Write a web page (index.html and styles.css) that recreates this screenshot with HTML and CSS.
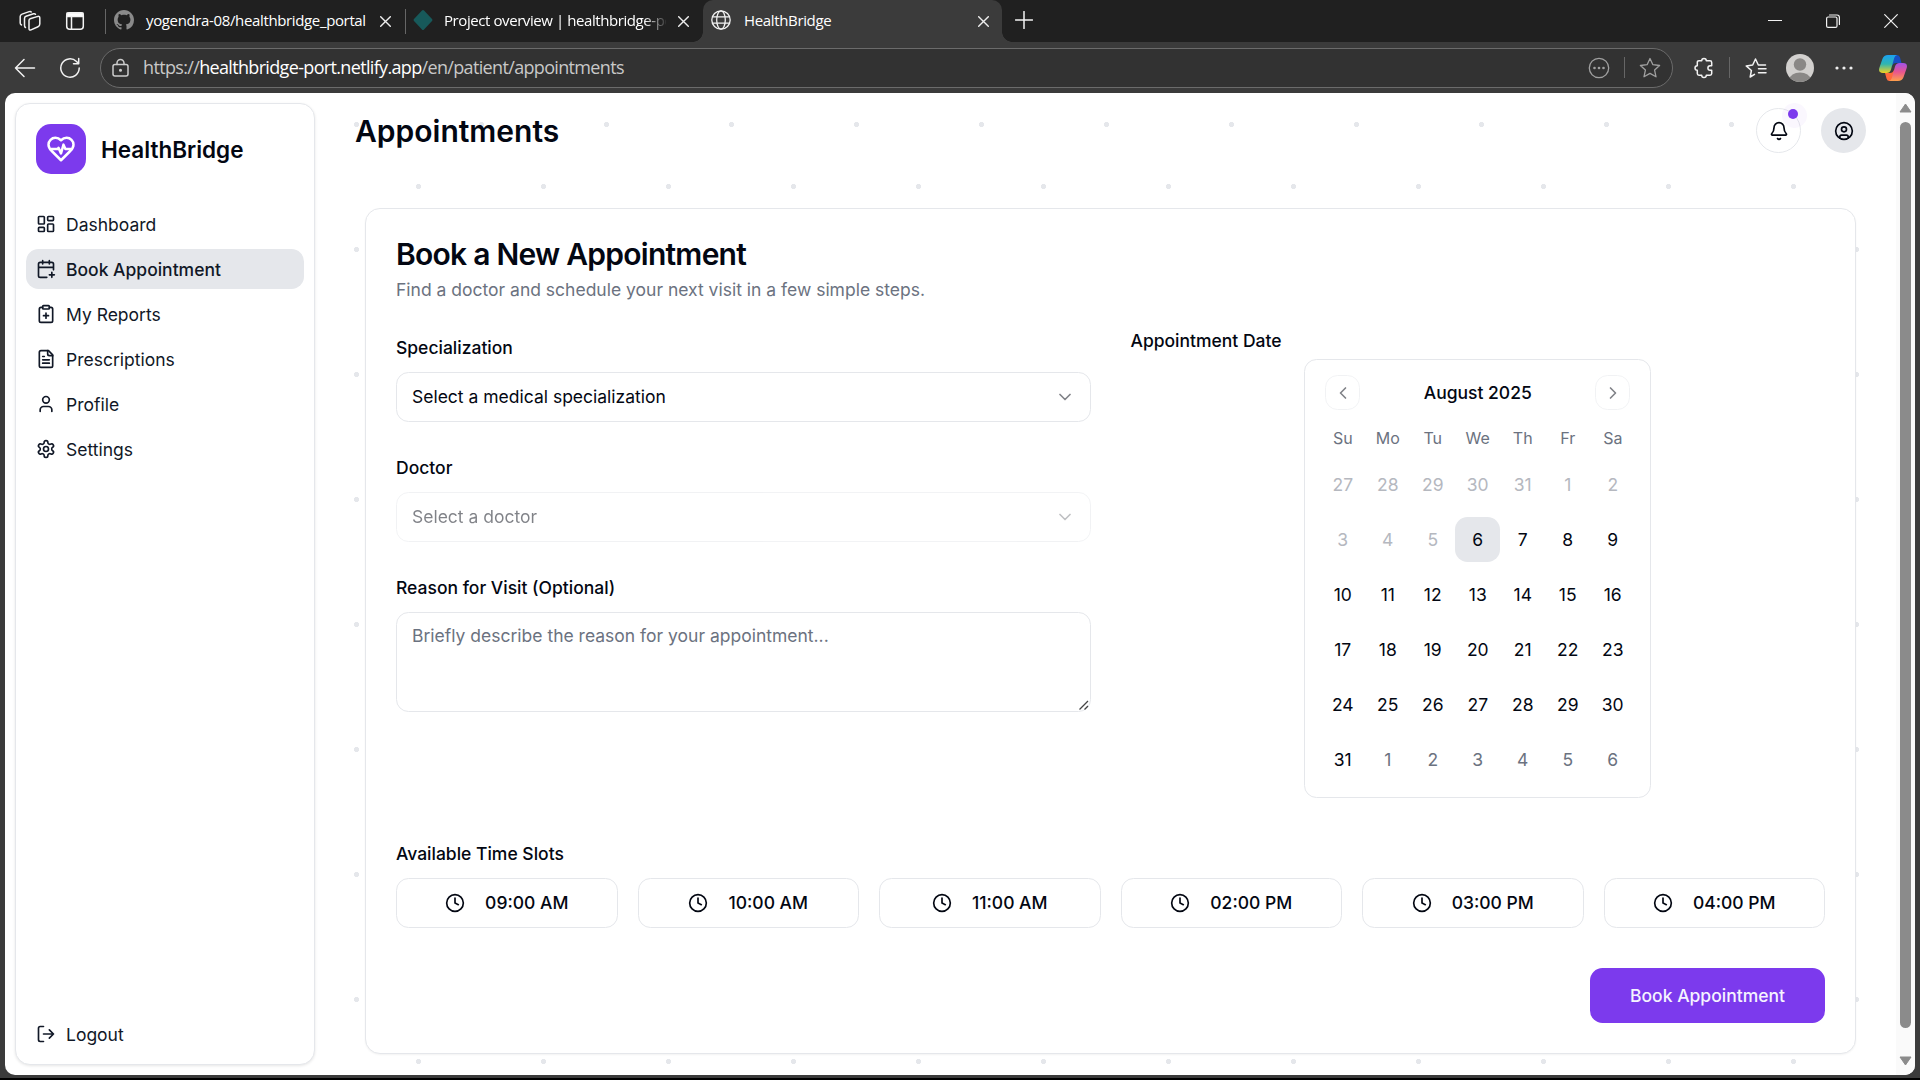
FILE: index.html
```html
<!DOCTYPE html>
<html lang="en">
<head>
<meta charset="utf-8">
<title>HealthBridge</title>
<link rel="stylesheet" href="styles.css">
</head>
<body>
<div class="tabstrip">
  <span class="slot slot-workspaces"><svg width="22" height="22" viewBox="0 0 22 22" class="chrome-icon"><path d="M11.200 8.800 18.800 6.400Q20.800 6 20.800 8V14Q20.800 16 19 16.700L12 19.900Q10 20.700 10 18.500V10.500Q10 9.200 11.200 8.800zM6.500 17.500Q5.500 17 5.500 15.500V8.500Q5.500 6.800 7 6.300L14.500 3.800Q16 3.400 16.500 4.300M2.500 15Q1.200 14.300 1.200 13V6.500Q1.200 4.700 3 4.100L10.200 1.600Q11.700 1.200 12.200 2"/></svg></span>
  <span class="slot slot-tabs"><svg width="20" height="20" viewBox="0 0 20 20" class="chrome-icon"><rect x="1.700" y="1.700" width="16.600" height="16.600" rx="3"/><path d="M2 2h16v3.500H2z" fill="#fff"/><path d="M6.500 6v12"/></svg></span>
  <div class="tab tab-idle">
    <svg class="favicon" viewBox="0 0 16 16" fill="#8a8a8a"><path d="M8 0C3.580 0 0 3.580 0 8c0 3.540 2.290 6.530 5.470 7.590.4.070.55-.17.55-.38 0-.19-.01-.82-.01-1.490-2.010.37-2.530-.49-2.690-.94-.09-.23-.48-.94-.82-1.130-.28-.15-.68-.52-.01-.53.630-.01 1.080.58 1.230.82.720 1.210 1.870.87 2.330.66.070-.52.280-.87.510-1.070-1.780-.2-3.640-.89-3.640-3.950 0-.87.310-1.590.82-2.150-.08-.2-.36-1.020.08-2.120 0 0 .67-.21 2.200.82.640-.18 1.320-.27 2-.27s1.360.09 2 .27c1.530-1.040 2.200-.82 2.200-.82.440 1.100.16 1.920.08 2.120.51.56.82 1.270.82 2.150 0 3.070-1.870 3.750-3.650 3.950.29.250.54.730.54 1.480 0 1.070-.01 1.930-.01 2.200 0 .21.150.46.550.38A8.010 8.010 0 0 0 16 8c0-4.420-3.580-8-8-8z"/></svg>
    <span class="tab-title t1">yogendra-08/healthbridge_portal</span>
    <svg class="close" viewBox="0 0 11 11"><path d="M.7.7l9.600 9.600M10.300.7.7 10.300"/></svg>
  </div>
  <div class="tab tab-idle tab-second">
    <svg class="favicon" viewBox="0 0 20 20"><path d="M9 .6q1-1 2 0l8 8.400q.9 1 0 2l-8 8.400q-1 1-2 0l-8-8.400q-.9-1 0-2z" fill="#17595a"/></svg>
    <span class="tab-title t2">Project overview | healthbridge-po</span>
    <svg class="close" viewBox="0 0 11 11"><path d="M.7.7l9.600 9.600M10.300.7.7 10.300"/></svg>
  </div>
  <div class="tab tab-active">
    <svg class="favicon chrome-icon" viewBox="0 0 20 20"><circle cx="10" cy="10" r="9.200"/><ellipse cx="10" cy="10" rx="4.300" ry="9.200"/><path d="M1.500 6.800h17M1.500 13.200h17"/></svg>
    <span class="tab-title t3">HealthBridge</span>
    <svg class="close" viewBox="0 0 11 11"><path d="M.7.7l9.600 9.600M10.300.7.7 10.300"/></svg>
  </div>
  <span class="slot slot-plus"><svg width="18" height="18" viewBox="0 0 18 18" class="chrome-icon"><path d="M9 .5v17M.5 9h17"/></svg></span>
  <div class="window-buttons">
    <span class="slot"><svg width="14" height="14" viewBox="0 0 14 14" class="chrome-icon thin"><path d="M.5 6.500h13"/></svg></span>
    <span class="slot"><svg width="14" height="14" viewBox="0 0 14 14" class="chrome-icon thin"><rect x=".6" y="3" width="10.400" height="10.400" rx="1.500"/><path d="M3.500 1h7.500q2.400 0 2.400 2.400V10.500"/></svg></span>
    <span class="slot"><svg width="14" height="14" viewBox="0 0 14 14" class="chrome-icon thin"><path d="M.7.7l12.600 12.600M13.300.7.7 13.300"/></svg></span>
  </div>
</div>

<div class="toolbar">
  <span class="slot slot-nav"><svg width="22" height="20" viewBox="0 0 22 20" class="chrome-icon"><path d="M20.500 10H1.500M10 1.500 1.500 10l8.500 8.500"/></svg></span>
  <span class="slot slot-reload"><svg width="22" height="22" viewBox="0 0 22 22" class="chrome-icon"><path d="M20.200 11a9.200 9.200 0 1 1-2.700-6.500L19.500 6.500M19.700 1.500v5.200H14.500"/></svg></span>
  <div class="address">
    <svg width="17" height="20" viewBox="0 0 17 20" class="chrome-icon dim"><rect x="1" y="6.500" width="15" height="11.500" rx="2"/><path d="M5 6.500V5a3.500 3.500 0 0 1 7 0v1.500"/><circle cx="8.500" cy="12.300" r=".8" fill="#ccc"/></svg>
    <span class="url">https://<b>healthbridge-port.netlify.app</b>/en/patient/appointments</span>
    <span class="address-tools">
      <svg width="22" height="22" viewBox="0 0 22 22" class="chrome-icon grey"><circle cx="11" cy="11" r="9.700"/><g fill="#a0a0a0" stroke="none"><circle cx="6.500" cy="11" r="1.300"/><circle cx="11" cy="11" r="1.300"/><circle cx="15.500" cy="11" r="1.300"/></g></svg>
      <i class="rule"></i>
      <svg width="22" height="22" viewBox="0 0 22 22" class="chrome-icon grey"><path d="m11 1.500 2.900 6.200 6.700.8-5 4.600 1.400 6.700-6-3.400-6 3.400 1.400-6.700-5-4.600 6.700-.8z"/></svg>
    </span>
  </div>
  <span class="slot slot-ext"><svg width="22" height="22" viewBox="0 0 22 22" class="chrome-icon"><path d="M6 3.700h2.700a2.300 2.300 0 0 1 4.600 0H17q1.700 0 1.700 1.700V8.700h-1.500a2.300 2.300 0 0 0 0 4.600h1.500V16.600q0 1.700-1.700 1.700h-3.700a2.300 2.300 0 0 1-4.600 0H6q-1.700 0-1.700-1.700v-3.300a2.300 2.300 0 0 1 0-4.600V5.400q0-1.700 1.700-1.700"/></svg></span>
  <i class="rule"></i>
  <span class="slot slot-fav"><svg width="22" height="22" viewBox="0 0 22 22" class="chrome-icon"><path d="M9.500 17.300 5.200 20l1.200-6.500L1.200 8.900l6.500-.9L10.500 2l2.800 6h7.200M13.500 11.700h7.500M13.500 15.700h7.500"/></svg></span>
  <span class="slot slot-avatar"><svg width="28" height="28" viewBox="0 0 28 28"><clipPath id="av"><circle cx="14" cy="14" r="14"/></clipPath><g clip-path="url(#av)"><path d="M0 0h28v28H0z" fill="#d2d0ce"/><circle cx="14" cy="10.500" r="6.200" fill="#8a8886"/><ellipse cx="14" cy="25.500" rx="10.500" ry="7" fill="#8a8886"/></g></svg></span>
  <span class="slot slot-more"><svg width="18" height="4" viewBox="0 0 18 4" fill="#eee"><circle cx="2" cy="2" r="1.600"/><circle cx="9" cy="2" r="1.600"/><circle cx="16" cy="2" r="1.600"/></svg></span>
  <span class="slot slot-copilot"><svg width="28" height="26" viewBox="0 0 28 26">
    <defs>
      <linearGradient id="ca" x1="0" y1="0" x2="0" y2="1"><stop offset="0" stop-color="#1ba1f2"/><stop offset=".5" stop-color="#2fb5b0"/><stop offset="1" stop-color="#f2d220"/></linearGradient>
      <linearGradient id="cb" x1="0" y1="0" x2="0" y2="1"><stop offset="0" stop-color="#a052e8"/><stop offset=".5" stop-color="#e8558f"/><stop offset="1" stop-color="#ffa04b"/></linearGradient>
    </defs>
    <path d="M13 0h5q2.200 0 3 2.500L22.500 8H17q-3 0-4 3z" fill="#174fc4"/>
    <path d="M15 26H10.500Q8.300 26 7.500 23.500L6 18h5q3 0 4-3z" fill="#ff6a3c"/>
    <path d="M9 0h9q-2 .3-2.800 3L12 14.500Q11 18 7.500 18H4q-5 0-3.700-5L3.400 4Q4.800 0 9 0z" fill="url(#ca)"/>
    <path d="M19 26H10q2-.3 2.800-3L16 11.500Q17 8 20.500 8H24q5 0 3.700 5L24.600 22Q23.200 26 19 26z" fill="url(#cb)"/>
  </svg></span>
</div>

<div class="viewport">
  <aside class="sidebar">
    <div class="brand">
      <span class="brand-mark"><svg viewBox="0 0 24 24" class="lucide"><path d="M19 14c1.490-1.460 3-3.210 3-5.500A5.500 5.500 0 0 0 16.500 3c-1.760 0-3 .5-4.500 2-1.500-1.500-2.740-2-4.500-2A5.500 5.500 0 0 0 2 8.500c0 2.300 1.500 4.050 3 5.500l7 7Z"/><path d="M3.220 12H9.500l.5-1 2 4.500 2-7 1.500 3.500h5.270"/></svg></span>
      <span class="brand-name">HealthBridge</span>
    </div>
    <nav class="nav">
      <a class="nav-item"><svg class="lucide" viewBox="0 0 24 24"><rect width="7" height="9" x="3" y="3" rx="1"/><rect width="7" height="5" x="14" y="3" rx="1"/><rect width="7" height="9" x="14" y="12" rx="1"/><rect width="7" height="5" x="3" y="16" rx="1"/></svg>Dashboard</a>
      <a class="nav-item active"><svg class="lucide" viewBox="0 0 24 24"><path d="M8 2v4M16 2v4M21 13V6a2 2 0 0 0-2-2H5a2 2 0 0 0-2 2v14a2 2 0 0 0 2 2h8M3 10h18M16 19h6M19 16v6"/></svg>Book Appointment</a>
      <a class="nav-item"><svg class="lucide" viewBox="0 0 24 24"><rect width="8" height="4" x="8" y="2" rx="1"/><path d="M16 4h2a2 2 0 0 1 2 2v14a2 2 0 0 1-2 2H6a2 2 0 0 1-2-2V6a2 2 0 0 1 2-2h2M9 14h6M12 17v-6"/></svg>My Reports</a>
      <a class="nav-item"><svg class="lucide" viewBox="0 0 24 24"><path d="M15 2H6a2 2 0 0 0-2 2v16a2 2 0 0 0 2 2h12a2 2 0 0 0 2-2V7Z"/><path d="M14 2v4a2 2 0 0 0 2 2h4M10 9H8M16 13H8M16 17H8"/></svg>Prescriptions</a>
      <a class="nav-item"><svg class="lucide" viewBox="0 0 24 24"><path d="M19 21v-2a4 4 0 0 0-4-4H9a4 4 0 0 0-4 4v2"/><circle cx="12" cy="7" r="4"/></svg>Profile</a>
      <a class="nav-item"><svg class="lucide" viewBox="0 0 24 24"><path d="M12.220 2h-.44a2 2 0 0 0-2 2v.18a2 2 0 0 1-1 1.730l-.43.250a2 2 0 0 1-2 0l-.15-.08a2 2 0 0 0-2.730.73l-.22.380a2 2 0 0 0 .73 2.730l.15.100a2 2 0 0 1 1 1.720v.51a2 2 0 0 1-1 1.740l-.15.090a2 2 0 0 0-.73 2.730l.22.380a2 2 0 0 0 2.730.73l.15-.08a2 2 0 0 1 2 0l.43.250a2 2 0 0 1 1 1.730V20a2 2 0 0 0 2 2h.44a2 2 0 0 0 2-2v-.18a2 2 0 0 1 1-1.730l.43-.25a2 2 0 0 1 2 0l.15.080a2 2 0 0 0 2.730-.73l.22-.39a2 2 0 0 0-.73-2.730l-.15-.08a2 2 0 0 1-1-1.740v-.5a2 2 0 0 1 1-1.740l.15-.09a2 2 0 0 0 .73-2.730l-.22-.38a2 2 0 0 0-2.730-.73l-.15.080a2 2 0 0 1-2 0l-.43-.25a2 2 0 0 1-1-1.730V4a2 2 0 0 0-2-2z"/><circle cx="12" cy="12" r="3"/></svg>Settings</a>
    </nav>
    <a class="nav-item logout"><svg class="lucide" viewBox="0 0 24 24"><path d="M9 21H5a2 2 0 0 1-2-2V5a2 2 0 0 1 2-2h4M16 17l5-5-5-5M21 12H9"/></svg>Logout</a>
  </aside>

  <main class="main">
    <header class="page-head">
      <h1>Appointments</h1>
      <div class="head-actions">
        <span class="round bell"><svg class="lucide" viewBox="0 0 24 24"><path d="M10.268 21a2 2 0 0 0 3.464 0"/><path d="M3.262 15.326A1 1 0 0 0 4 17h16a1 1 0 0 0 .74-1.673C19.410 13.956 18 12.499 18 8A6 6 0 0 0 6 8c0 4.499-1.411 5.956-2.738 7.326"/></svg><i class="ping"></i><i class="badge"></i></span>
        <span class="round user"><svg class="lucide" viewBox="0 0 24 24"><path d="M7 20.660V19a2 2 0 0 1 2-2h6a2 2 0 0 1 2 2v1.660"/><circle cx="12" cy="10" r="3"/><circle cx="12" cy="12" r="10"/></svg></span>
      </div>
    </header>

    <section class="card">
      <h2>Book a New Appointment</h2>
      <p class="lead">Find a doctor and schedule your next visit in a few simple steps.</p>
      <div class="columns">
        <div class="fields">
          <div class="field">
            <label>Specialization</label>
            <div class="select"><span>Select a medical specialization</span><svg class="lucide" viewBox="0 0 24 24"><path d="m6 9 6 6 6-6"/></svg></div>
          </div>
          <div class="field">
            <label>Doctor</label>
            <div class="select disabled"><span>Select a doctor</span><svg class="lucide" viewBox="0 0 24 24"><path d="m6 9 6 6 6-6"/></svg></div>
          </div>
          <div class="field reason">
            <label>Reason for Visit (Optional)</label>
            <textarea placeholder="Briefly describe the reason for your appointment..."></textarea>
            <svg class="grip" viewBox="0 0 12 12"><path d="M1.500 10.500l8.500-8.500M6.500 10.500 10 7"/></svg>
          </div>
        </div>
        <div class="date">
          <label class="date-label">Appointment Date</label>
          <div class="calendar">
            <div class="cal-head">
              <span class="cal-nav"><svg class="lucide" viewBox="0 0 24 24"><path d="m15 18-6-6 6-6"/></svg></span>
              <span class="month">August 2025</span>
              <span class="cal-nav"><svg class="lucide" viewBox="0 0 24 24"><path d="m9 18 6-6-6-6"/></svg></span>
            </div>
            <div class="week names"><span>Su</span><span>Mo</span><span>Tu</span><span>We</span><span>Th</span><span>Fr</span><span>Sa</span></div>
            <div class="week past"><span>27</span><span>28</span><span>29</span><span>30</span><span>31</span><span>1</span><span>2</span></div>
            <div class="week"><span class="off">3</span><span class="off">4</span><span class="off">5</span><span class="today">6</span><span>7</span><span>8</span><span>9</span></div>
            <div class="week"><span>10</span><span>11</span><span>12</span><span>13</span><span>14</span><span>15</span><span>16</span></div>
            <div class="week"><span>17</span><span>18</span><span>19</span><span>20</span><span>21</span><span>22</span><span>23</span></div>
            <div class="week"><span>24</span><span>25</span><span>26</span><span>27</span><span>28</span><span>29</span><span>30</span></div>
            <div class="week"><span>31</span><span class="next">1</span><span class="next">2</span><span class="next">3</span><span class="next">4</span><span class="next">5</span><span class="next">6</span></div>
          </div>
        </div>
      </div>
      <div class="field slots-field">
        <label>Available Time Slots</label>
        <div class="slots">
          <button class="time"><svg class="lucide" viewBox="0 0 24 24"><circle cx="12" cy="12" r="10"/><path d="M12 6v6l4 2"/></svg>09:00 AM</button>
          <button class="time"><svg class="lucide" viewBox="0 0 24 24"><circle cx="12" cy="12" r="10"/><path d="M12 6v6l4 2"/></svg>10:00 AM</button>
          <button class="time"><svg class="lucide" viewBox="0 0 24 24"><circle cx="12" cy="12" r="10"/><path d="M12 6v6l4 2"/></svg>11:00 AM</button>
          <button class="time"><svg class="lucide" viewBox="0 0 24 24"><circle cx="12" cy="12" r="10"/><path d="M12 6v6l4 2"/></svg>02:00 PM</button>
          <button class="time"><svg class="lucide" viewBox="0 0 24 24"><circle cx="12" cy="12" r="10"/><path d="M12 6v6l4 2"/></svg>03:00 PM</button>
          <button class="time"><svg class="lucide" viewBox="0 0 24 24"><circle cx="12" cy="12" r="10"/><path d="M12 6v6l4 2"/></svg>04:00 PM</button>
        </div>
      </div>
      <div class="submit-row"><button class="submit">Book Appointment</button></div>
    </section>
  </main>

  <div class="scrollbar">
    <svg width="13" height="10" viewBox="0 0 13 10"><path d="M6.500 1 12 9H1z" fill="#8b8b8b" stroke="#8b8b8b" stroke-linejoin="round"/></svg>
    <i class="thumb"></i>
    <svg width="13" height="10" viewBox="0 0 13 10"><path d="M6.500 9 12 1H1z" fill="#8b8b8b" stroke="#8b8b8b" stroke-linejoin="round"/></svg>
  </div>
</div>
</body>
</html>
```
FILE: styles.css
```css
* { box-sizing: border-box; }

body {
  margin: 0;
  width: 1920px;
  height: 1080px;
  overflow: hidden;
  display: flex;
  flex-direction: column;
  background: #3b3b3b;
  border-bottom: 2px solid #000;
  font-family: Inter, "Liberation Sans", sans-serif;
  font-size: 17.5px;
  line-height: 25px;
  color: #030712;
}

/* Browser chrome */
.tabstrip {
  height: 42px;
  flex: none;
  display: flex;
  align-items: center;
  background: #202020;
  font: 15px/20px "Open Sans", "Noto Sans", sans-serif;
  color: #fff;
}
.slot { display: flex; align-items: center; justify-content: center; flex: none; }
.chrome-icon { fill: none; stroke: #f2f2f2; stroke-width: 1.5; stroke-linecap: round; stroke-linejoin: round; }
.chrome-icon.thin { stroke-width: 1.2; }
.chrome-icon.dim { stroke: #ccc; }
.chrome-icon.grey { stroke: #a0a0a0; stroke-width: 1.3; }
.slot-workspaces { width: 32px; margin-left: 14px; }
.slot-tabs { width: 58px; margin-right: 1px; padding-bottom: 1px; }
.slot-plus { width: 44px; padding-bottom: 3px; }
.tab { display: flex; align-items: center; height: 42px; padding-left: 8px; flex: none; position: relative; }
.tab-idle { width: 300px; }
.tab-idle::before { content: ""; width: 1px; height: 25px; background: #666; margin: 0 8px 0 -8px; }
.tab-second { width: 298px; }
.favicon { width: 20px; height: 20px; flex: none; margin: 0 12px 2px 0; }
.tab-second .favicon { margin: 0 11px 2px -1px; }
.favicon.chrome-icon { margin-right: 13px; stroke-width: 1.3; }
.tab-title { width: 222px; white-space: nowrap; padding-bottom: 3px; }
.t1 { letter-spacing: -.36px; }
.t2 { letter-spacing: -.42px; -webkit-mask-image: linear-gradient(90deg, #000 90%, transparent 101%); mask-image: linear-gradient(90deg, #000 90%, transparent 101%); }
.t3 { letter-spacing: -.35px; }
.close { width: 11px; height: 11px; flex: none; margin-left: 12px; fill: none; stroke: #eee; stroke-width: 1.4; stroke-linecap: round; }
.tab-active { width: 299px; background: #3b3b3b; border-radius: 10px 10px 0 0; }
.tab-active .close { margin-left: 12px; }
.tab-active::before,
.tab-active::after { content: ""; position: absolute; bottom: 0; width: 10px; height: 10px; }
.tab-active::before { left: -10px; background: radial-gradient(circle at 0 0, #202020 9.5px, #3b3b3b 10px); }
.tab-active::after { right: -10px; background: radial-gradient(circle at 100% 0, #202020 9.5px, #3b3b3b 10px); }
.window-buttons { display: flex; margin-left: auto; }
.window-buttons .slot { width: 58px; }

.toolbar { height: 51px; flex: none; display: flex; align-items: center; background: #3b3b3b; }
.slot-nav { width: 50px; }
.slot-reload { width: 40px; margin-right: 10px; }
.address {
  width: 1573px;
  height: 40px;
  display: flex;
  align-items: center;
  padding: 0 11px;
  border: 1.5px solid #6b6b6b;
  border-radius: 20px;
  background: #323232;
}
.url { margin-left: 14px; padding-bottom: 2px; font: 18px/24px "Open Sans", "Noto Sans", sans-serif; letter-spacing: -.66px; color: #c8c8c8; white-space: nowrap; }
.url b { font-weight: 400; color: #fff; }
.address-tools { display: flex; align-items: center; margin-left: auto; gap: 14px; }
.rule { width: 1px; height: 21px; background: #666; }
.slot-ext { width: 56px; padding-left: 5px; }
.slot-fav { width: 51px; }
.slot-avatar { width: 38px; }
.slot-more { width: 50px; }
.slot-copilot { width: 44px; margin-left: 2px; }

/* Page viewport */
.viewport {
  height: 981.5px;
  margin: 0 5px;
  flex: none;
  display: flex;
  overflow: hidden;
  border-radius: 10px;
  background-color: #fff;
  background-image:
    radial-gradient(circle, #e5e7eb 2.3px, transparent 2.9px),
    radial-gradient(circle, #e5e7eb 2.3px, transparent 2.9px);
  background-size: 125px 125px;
  background-position: 38.5px 93.5px, 101px 31px;
  background-position: 289px 94px, 351px 31px;
}
.lucide { width: 20px; height: 20px; flex: none; fill: none; stroke: currentColor; stroke-width: 2; stroke-linecap: round; stroke-linejoin: round; }

.sidebar {
  width: 300px;
  height: 962px;
  margin: 10px 0 0 10px;
  flex: none;
  display: flex;
  flex-direction: column;
  padding: 20px 10px 10px;
  background: #fff;
  border: 1px solid #e5e7eb;
  border-radius: 15px;
  box-shadow: 0 1px 3px rgba(0, 0, 0, .1);
}
.brand { display: flex; align-items: center; gap: 15px; padding-left: 10px; }
.brand-mark { width: 50px; height: 50px; display: flex; align-items: center; justify-content: center; border-radius: 15px; background: #7c3aed; color: #fff; }
.brand-mark .lucide { width: 30px; height: 30px; }
.brand-name { font-size: 22.5px; font-weight: 600; line-height: 30px; padding-top: 2px; }
.nav { display: flex; flex-direction: column; gap: 5px; margin-top: 30px; }
.nav-item { display: flex; align-items: center; gap: 10px; height: 40px; padding: 0 10px; border-radius: 12.5px; color: #111827; }
.nav-item.active { background: #e5e7eb; font-weight: 500; }
.logout { margin-top: auto; }

.main { width: 1511px; margin-left: 40px; }
.page-head { display: flex; align-items: center; justify-content: space-between; height: 45px; margin-top: 15px; }
h1, h2 { margin: 0; font-size: 30px; font-weight: 600; }
h1 { line-height: 40px; }
h2 { line-height: 30px; letter-spacing: -.75px; }
.head-actions { display: flex; gap: 20px; }
.round { position: relative; width: 45px; height: 45px; display: flex; align-items: center; justify-content: center; border-radius: 50%; }
.bell { border: 1px solid #e5e7eb; background: #fff; }
.user { background: #e5e7eb; }
.ping { position: absolute; left: 25px; top: -6px; width: 25px; height: 25px; border-radius: 50%; background: rgba(124, 58, 237, .04); }
.badge { position: absolute; left: 31px; top: 0; width: 10px; height: 10px; border-radius: 50%; background: #7c3aed; }

.card {
  margin: 55px 10px 0;
  width: 1491px;
  height: 846px;
  padding: 30px;
  background: #fff;
  border: 1px solid #e5e7eb;
  border-radius: 15px;
  box-shadow: 0 1px 2px rgba(0, 0, 0, .05);
}
.lead { margin: 8px 0 30px; color: #6b7280; }
.columns { display: grid; grid-template-columns: 1fr 1fr; gap: 40px; }
.fields { display: flex; flex-direction: column; gap: 30px; }
.field label { display: block; height: 32px; line-height: 32px; margin-bottom: 8px; font-weight: 500; }
.select {
  height: 50px;
  display: flex;
  align-items: center;
  justify-content: space-between;
  padding: 0 15px;
  border: 1px solid #e5e7eb;
  border-radius: 12.5px;
}
.select span { padding-bottom: 2px; }
.select .lucide { opacity: .5; }
.select.disabled { opacity: .5; }
.reason { position: relative; }
textarea {
  display: block;
  width: 100%;
  height: 100px;
  padding: 10px 15px;
  border: 1px solid #e5e7eb;
  border-radius: 12.5px;
  font: inherit;
  background: #fff;
  resize: none;
}
textarea::placeholder { color: #6b7280; }
.grip { position: absolute; right: 1px; bottom: 1px; width: 12px; height: 12px; fill: none; stroke: #444; stroke-width: 1.3; }
.date-label { display: block; line-height: 18px; margin-bottom: 9px; font-weight: 500; }
.calendar { width: 347px; height: 439px; margin: 0 auto; padding: 15px; border: 1px solid #e5e7eb; border-radius: 12.5px; }
.cal-head { display: flex; align-items: center; justify-content: space-between; height: 35px; padding: 0 5px; margin-bottom: 15px; }
.month { font-weight: 500; }
.cal-nav { width: 35px; height: 35px; display: flex; align-items: center; justify-content: center; border: 1px solid #e5e7eb; border-radius: 12.5px; opacity: .5; }
.week { display: grid; grid-template-columns: repeat(7, 45px); margin-top: 10px; }
.week span { height: 45px; line-height: 45px; text-align: center; }
.week.names { margin-top: 0; color: #6b7280; font-size: 16px; }
.week.names span { height: 27px; line-height: 27px; }
.past, .off { color: #b5b8bf; }
.next { color: #6b7280; }
.week .today { background: #e5e7eb; border-radius: 12.5px; }

.slots-field { margin-top: 40px; }
.slots { display: grid; grid-template-columns: repeat(6, 1fr); gap: 20px; }
button { font: inherit; font-weight: 500; color: inherit; padding: 0; }
.time { height: 50px; display: flex; align-items: center; justify-content: center; gap: 20px; padding-bottom: 1px; background: #fff; border: 1px solid #e5e7eb; border-radius: 12.5px; }
.submit-row { display: flex; justify-content: flex-end; margin-top: 40px; }
.submit { width: 235px; height: 55px; border: 0; border-radius: 12.5px; background: #7c3aed; color: #f5f3ff; }

.scrollbar { width: 19px; margin-left: auto; display: flex; flex-direction: column; align-items: center; padding: 10px 0 9px; background: #fafafa; }
.thumb { width: 11px; height: 906px; margin: 9px 0 auto; border-radius: 6px; background: #8b8b8b; }
```
